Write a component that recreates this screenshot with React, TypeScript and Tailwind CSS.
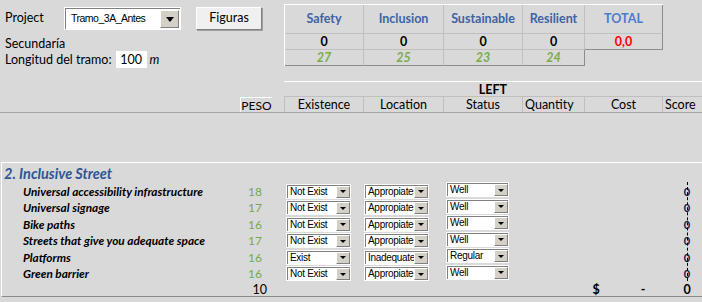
import React from 'react';

const rows = [
  { label: 'Universal accessibility infrastructure', peso: 18, ex: 'Not Exist', loc: 'Appropiate', st: 'Well' },
  { label: 'Universal signage', peso: 17, ex: 'Not Exist', loc: 'Appropiate', st: 'Well' },
  { label: 'Bike paths', peso: 16, ex: 'Not Exist', loc: 'Appropiate', st: 'Well' },
  { label: 'Streets that give you adequate space', peso: 17, ex: 'Not Exist', loc: 'Appropiate', st: 'Well' },
  { label: 'Platforms', peso: 16, ex: 'Exist', loc: 'Inadequate', st: 'Regular' },
  { label: 'Green barrier', peso: 16, ex: 'Not Exist', loc: 'Appropiate', st: 'Well' },
];

const pillars = [
  { name: 'Safety', score: 0, max: 27, w: 'w-[79px]' },
  { name: 'Inclusion', score: 0, max: 25, w: 'w-[80px]' },
  { name: 'Sustainable', score: 0, max: 23, w: 'w-[79px]' },
  { name: 'Resilient', score: 0, max: 24, w: 'w-[62px]' },
];

function Arrow({ big }: { big?: boolean }) {
  return (
    <div
      className={`flex h-full shrink-0 items-center justify-center border border-t-white border-l-white border-r-[#808080] border-b-[#808080] bg-[#d4d0c8] ${big ? 'w-[19px]' : 'w-[14px]'}`}
    >
      <div
        className={
          big
            ? 'h-0 w-0 border-t-[5px] border-r-[4px] border-l-[4px] border-t-black border-r-transparent border-l-transparent'
            : 'h-0 w-0 border-t-[3px] border-r-[3px] border-l-[3px] border-t-black border-r-transparent border-l-transparent'
        }
      />
    </div>
  );
}

function Combo({ value, w }: { value: string; w: string }) {
  return (
    <div className={`h-[15px] bg-white p-px ${w}`}>
      <div className="flex h-full border-t border-l border-[#808080]">
        <div className="flex-1 overflow-hidden whitespace-nowrap pl-[2px] font-['Liberation_Sans',sans-serif] text-[10px] leading-[12px] tracking-[-0.3px] text-black">
          {value}
        </div>
        <Arrow />
      </div>
    </div>
  );
}

export default function App() {
  return (
    <div className="h-[302px] w-[702px] overflow-hidden bg-[#d9d9d9] font-['Lato',sans-serif] text-[12.5px] text-black">
      {/* header area */}
      <div className="flex h-[81px]">
        <div className="w-[284px]">
          <div className="mt-[7px] flex h-[23px] items-center">
            <span className="w-[64px] pl-[5px]">Project</span>
            <div className="h-[23px] w-[117px] bg-white p-px">
              <div className="flex h-full border-t border-l border-[#808080]">
                <div className="flex flex-1 items-center pl-[5px] font-['Liberation_Sans',sans-serif] text-[10.5px] tracking-[-0.5px]">Tramo_3A_Antes</div>
                <div className="py-px pr-px">
                  <Arrow big />
                </div>
              </div>
            </div>
            <button className="ml-[15px] h-[23px] w-[66px] border border-t-white border-l-white border-r-[#808080] border-b-[#808080] bg-[#f0f0f0] text-[12.5px] shadow-[1px_1px_0_#a0a0a0]">
              Figuras
            </button>
          </div>
          <div className="mt-[7px] flex h-[14px] items-center pl-[5px]">Secundaría</div>
          <div className="flex h-[17px] items-center pl-[5px]">
            <span className="pt-px">Longitud del tramo:</span>
            <div className="ml-[4px] flex h-[17px] w-[31px] items-center justify-center bg-white pt-px">100</div>
            <span className="ml-[3px] pt-px italic">m</span>
          </div>
        </div>

        <div className="mt-[4px]">
          <div className="flex border-t border-l border-white">
            {pillars.map((p) => (
              <div key={p.name} className={`flex h-[29px] items-center justify-center border-r border-b border-[#c0c0c0] pt-px font-bold text-[#4062a6] ${p.w}`}>
                {p.name}
              </div>
            ))}
            <div className="flex h-[29px] w-[78px] items-center justify-center border-r border-b border-r-[#8c8c8c] border-b-[#c0c0c0] pt-px font-bold text-[#4a7bcf]">
              TOTAL
            </div>
          </div>
          <div className="flex border-l border-white">
            {pillars.map((p) => (
              <div key={p.name} className={`flex h-[16px] items-center justify-center border-r border-b border-[#c0c0c0] pt-px font-bold ${p.w}`}>
                {p.score}
              </div>
            ))}
            <div className="flex h-[16px] w-[78px] items-center justify-center border-r border-b border-[#8c8c8c] pt-px font-bold text-[#ff0000]">
              0,0
            </div>
          </div>
          <div className="flex border-l border-white">
            {pillars.map((p, i) => (
              <div
                key={p.name}
                className={`flex h-[16px] items-center justify-center border-b border-b-[#8c8c8c] pt-px font-bold text-[#78ad4a] italic ${p.w} ${i === 3 ? 'border-r border-r-[#8c8c8c]' : 'border-r border-r-[#c0c0c0]'}`}
              >
                {p.max}
              </div>
            ))}
          </div>
        </div>
      </div>

      {/* LEFT header */}
      <div className="flex">
        <div className="w-[284px]" />
        <div className="flex h-[16px] w-[418px] items-center justify-center border-t border-b border-t-white border-b-[#bfbfbf] pt-[2px] font-bold">
          LEFT
        </div>
      </div>
      <div className="flex h-[16px] border-b border-[#a6a6a6]">
        <div className="w-[240px]" />
        <div className="flex w-[32px] items-center justify-center border-t border-l border-white pt-[2px] text-[12px]">PESO</div>
        <div className="w-[12px]" />
        <div className="flex w-[79px] items-center justify-center border-l border-[#bfbfbf] pt-[2px]">Existence</div>
        <div className="flex w-[80px] items-center justify-center border-l border-[#bfbfbf] pt-[2px]">Location</div>
        <div className="flex w-[79px] items-center justify-center border-l border-[#bfbfbf] pt-[2px]">Status</div>
        <div className="flex w-[62px] items-center border-l border-[#bfbfbf] pt-[2px] pl-[2px]">Quantity</div>
        <div className="flex w-[78px] items-center justify-center border-l border-[#bfbfbf] pt-[2px]">Cost</div>
        <div className="flex flex-1 items-center border-l border-[#bfbfbf] pt-[2px] pl-[2px]">Score</div>
      </div>

      <div className="h-[49px]" />

      {/* section box */}
      <div className="relative ml-px border-t border-l border-b border-t-white border-l-white border-b-[#8c8c8c]">
        <div className="flex h-[20px] items-center pt-px pl-[2px] text-[14.5px] font-bold text-[#2f5597] italic">2. Inclusive Street</div>
        {rows.map((r) => (
          <div key={r.label} className="flex h-[16.5px] items-center">
            <div className="w-[238px] pt-px pl-[21px] text-[11.8px] font-bold italic">{r.label}</div>
            <div className="w-[22px] pt-px text-right text-[12px] text-[#78a84a]">{r.peso}</div>
            <div className="w-[24px]" />
            <Combo value={r.ex} w="w-[65px]" />
            <div className="w-[13px]" />
            <Combo value={r.loc} w="w-[65px]" />
            <div className="w-[17px]" />
            <div className="-mt-[3px]">
              <Combo value={r.st} w="w-[63px]" />
            </div>
            <div className="ml-auto w-[30px] pt-px text-center text-[11px] font-bold text-[#10163a]">0</div>
          </div>
        ))}
        <div className="flex h-[14px] items-center pt-[3px]">
          <div className="w-[265px] text-right">10</div>
          <div className="w-[325px]" />
          <div className="w-[8px] text-center font-bold">$</div>
          <div className="w-[40px]" />
          <div className="w-[6px] text-center font-bold">-</div>
          <div className="ml-auto w-[30px] text-center font-bold">0</div>
        </div>
        <div className="absolute top-[19px] left-[685px] h-[99px] border-l border-dashed border-black" />
      </div>
    </div>
  );
}
